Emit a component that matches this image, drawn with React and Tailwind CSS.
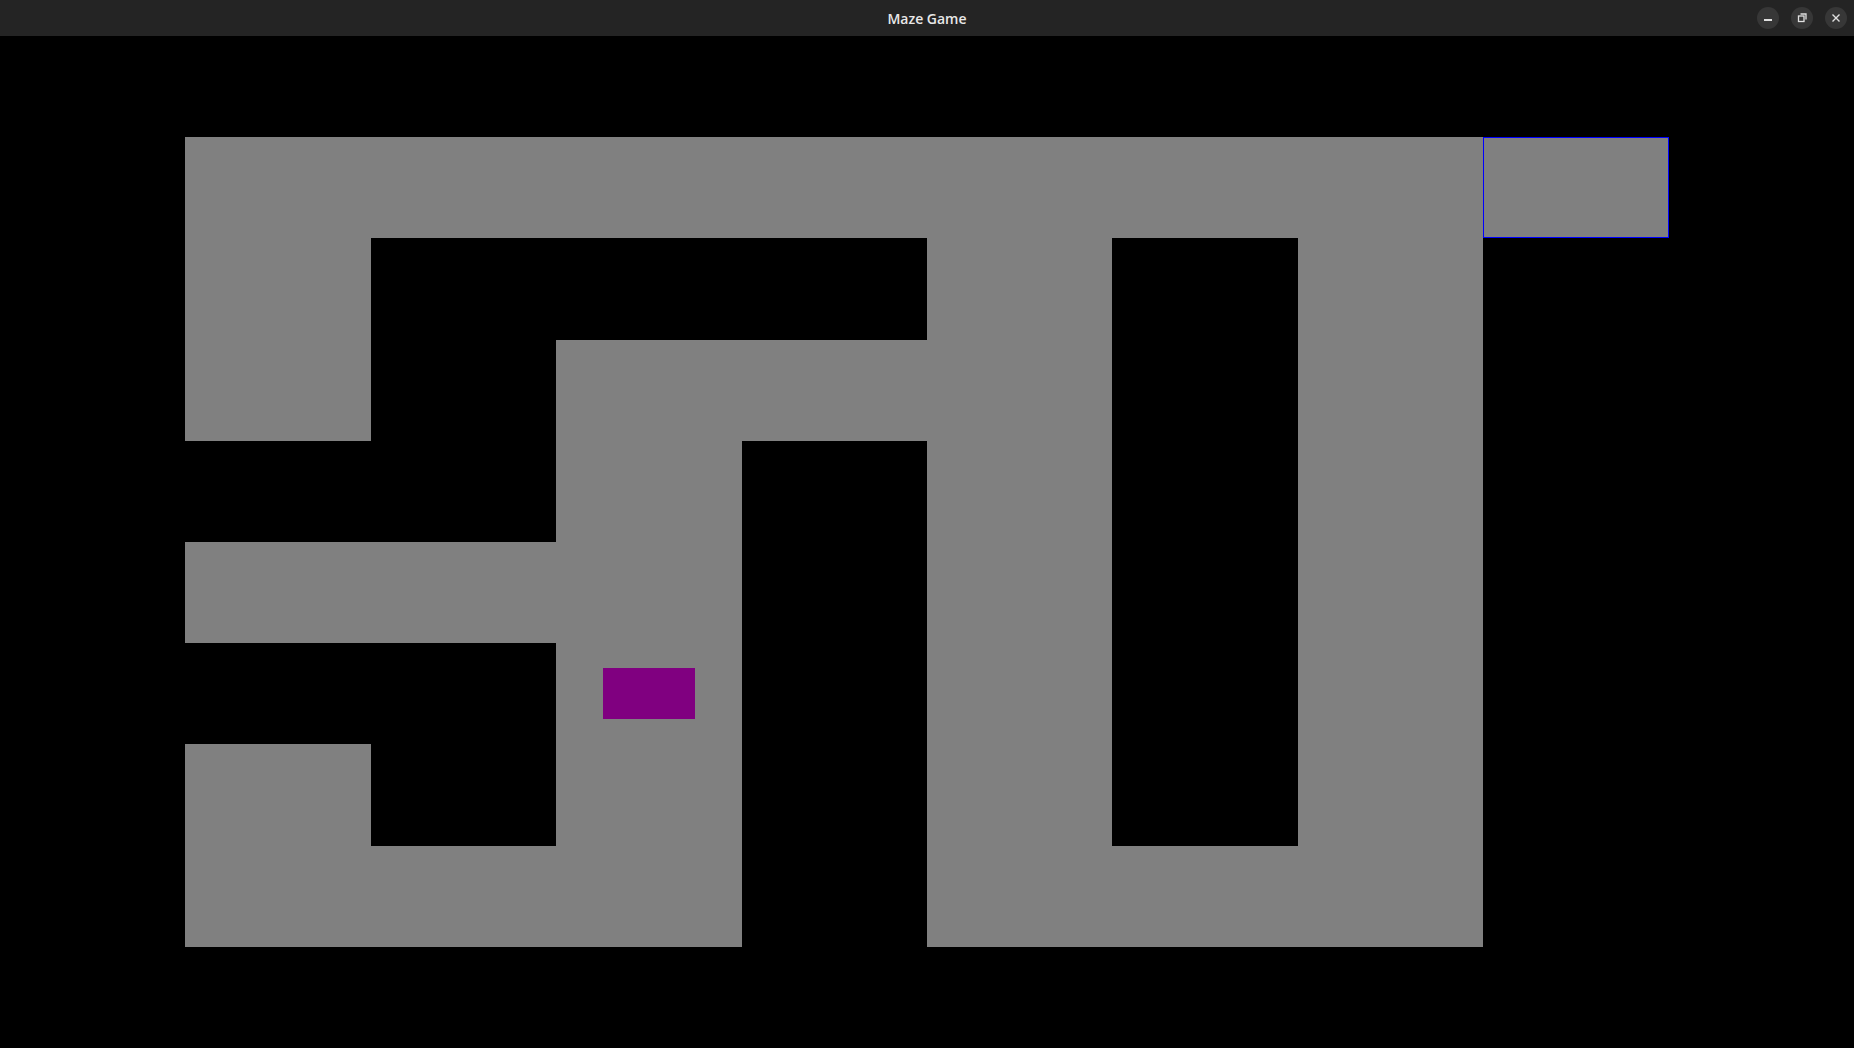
import React from 'react';

// P = path, W = wall, E = exit, S = start (player)
const MAZE = [
  'PPPPPPPE',
  'PWWWPWPW',
  'PWPPPWPW',
  'WWPWPWPW',
  'PPPWPWPW',
  'WWSWPWPW',
  'PWPWPWPW',
  'PPPWPPPW',
];

const cellAt = (r, c) => {
  const row = MAZE[r - 1];
  if (!row) return 'W';
  return row[c - 1] || 'W';
};

const TitleButton = ({ children }) => (
  <div className="w-[22px] h-[22px] rounded-full bg-[#373737] flex items-center justify-center">
    {children}
  </div>
);

const Cell = ({ type }) => {
  if (type === 'W') return <div className="bg-black" />;
  if (type === 'E') return <div className="bg-[#808080] border border-[#0000ff]" />;
  return (
    <div className="bg-[#808080] flex items-center justify-center">
      {type === 'S' && <div className="w-1/2 h-1/2 bg-[#800080]" />}
    </div>
  );
};

const App = () => {
  const cells = [];
  for (let r = 0; r < 10; r++) {
    for (let c = 0; c < 10; c++) {
      cells.push(<Cell key={`${r}-${c}`} type={cellAt(r, c)} />);
    }
  }

  return (
    <div className="w-[1854px] h-[1048px] flex flex-col bg-black overflow-hidden">
      {/* Title bar */}
      <div className="h-[36px] shrink-0 bg-[#242424] flex items-center relative">
        <div className="flex-1 text-center text-[14px] font-semibold text-[#e8e8e8] font-['Open_Sans',sans-serif]">
          Maze Game
        </div>
        <div className="absolute right-[7px] top-[7px] flex gap-[12px]">
          <TitleButton>
            <div className="w-[8px] h-[1.5px] bg-[#e0e0e0] mt-[4px]" />
          </TitleButton>
          <TitleButton>
            <svg width="10" height="10" viewBox="0 0 10 10" fill="none" stroke="#e0e0e0" strokeWidth="1.3">
              <rect x="1.5" y="3" width="5.5" height="5.5" />
              <path d="M3.5 1 H9 V6.5" />
            </svg>
          </TitleButton>
          <TitleButton>
            <svg width="10" height="10" viewBox="0 0 10 10" fill="none" stroke="#e0e0e0" strokeWidth="1.4">
              <path d="M1.5 1.5 L8.5 8.5 M8.5 1.5 L1.5 8.5" />
            </svg>
          </TitleButton>
        </div>
      </div>

      {/* Maze canvas */}
      <div className="flex-1 grid grid-cols-10 grid-rows-10">
        {cells}
      </div>
    </div>
  );
};

export default App;
